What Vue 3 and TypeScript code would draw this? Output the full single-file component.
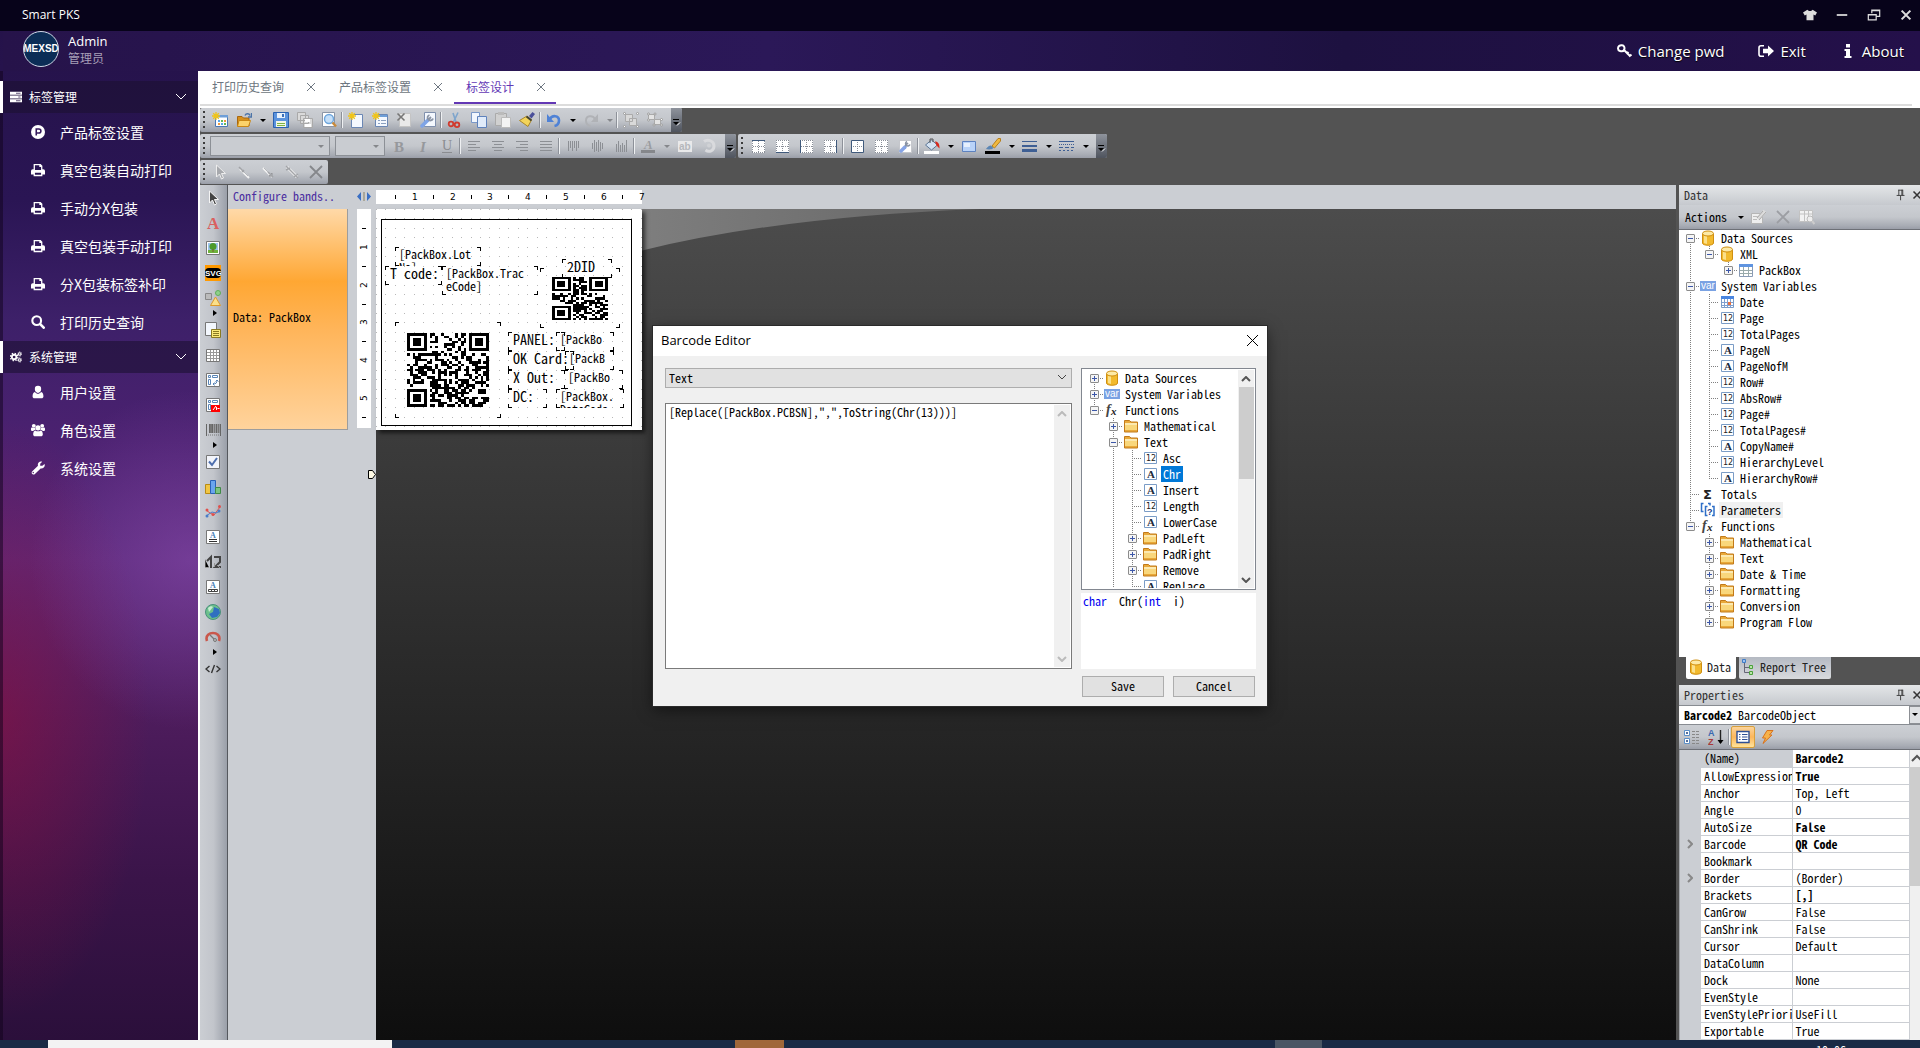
<script setup lang="ts">
import { ref } from 'vue'

interface TreeNode {
  label: string
  icon: string
  state?: 'open' | 'closed'
  mark?: 'selected' | 'hot'
  children?: TreeNode[]
}
interface TreeRow extends TreeNode {
  guides: boolean[]
  first: boolean
  last: boolean
}
interface Tool {
  kind: 'icon' | 'split' | 'sep'
  icon?: string
  name?: string
  off?: boolean
}

const icons: Record<string, string> = {
  server: '<path fill="#fff" d="M0 1h16v4H0zM0 6h16v4H0zM0 11h16v4H0z"/><path stroke="#2a1747" d="M8 3h6M3 8h0M11 8h3M8 13h6"/>',
  parking: '<circle cx="8" cy="8" r="8" fill="#fff"/><path d="M6 12V4.500h3a2.300 2.300 0 0 1 0 4.600H6" fill="none" stroke="#35195c" stroke-width="1.800"/>',
  print: '<path fill="#fff" fill-rule="evenodd" d="M3 1h8l2 2v4h1a2 2 0 0 1 2 2v4h-3v2H3v-2H0V9a2 2 0 0 1 2-2h1zM4.500 2.500V8h7V4.500H9.500v-2zM4.500 11v2.500h7V11z"/>',
  search: '<circle cx="6.500" cy="6.500" r="5" fill="none" stroke="#fff" stroke-width="2.400"/><path d="m10.500 10.500 4 4" stroke="#fff" stroke-width="3" stroke-linecap="round"/>',
  cogs: '<g fill="none" stroke="#fff"><circle cx="5.500" cy="8" r="3" stroke-width="2.400"/><circle cx="5.500" cy="8" r="5" stroke-width="1.600" stroke-dasharray="2 1.930"/><circle cx="13" cy="4" r="1.700" stroke-width="1.400"/><circle cx="13" cy="4" r="2.800" stroke-width="1" stroke-dasharray="1.200 1"/><circle cx="13" cy="12" r="1.700" stroke-width="1.400"/><circle cx="13" cy="12" r="2.800" stroke-width="1" stroke-dasharray="1.200 1"/></g>',
  user: '<path fill="#fff" d="M8 1a3.600 3.600 0 0 1 3.600 3.800C11.600 7 10 9 8 9S4.400 7 4.400 4.800A3.600 3.600 0 0 1 8 1zM4.500 8C5.500 9.300 6.700 10 8 10s2.500-.7 3.500-2c2 .3 2.700 2.500 2.700 5 0 1.500-1 2-2 2H3.800c-1 0-2-.5-2-2 0-2.500.7-4.700 2.700-5z"/>',
  group: '<g fill="#fff"><circle cx="3.200" cy="3.200" r="2.200"/><circle cx="12.800" cy="3.200" r="2.200"/><path d="M0 6.500c0-1.200 1-1.500 2-1.200 1 .4 2 .4 2.600 0 0 1.200.2 2 .8 2.700C4 8 3.200 8.500 2.500 9H1C.3 9 0 8.500 0 8zM16 6.500c0-1.200-1-1.500-2-1.200-1 .4-2 .4-2.600 0 0 1.200-.2 2-.8 2.700 1.400 0 2.200.5 2.900 1H15c.7 0 1-.5 1-1z"/><circle cx="8" cy="5.500" r="3"/><path d="M4.800 8.500c2 1.300 4.400 1.300 6.400 0 1.500.3 2.300 2 2.300 4.500 0 1.400-1 2-2 2h-7c-1 0-2-.6-2-2 0-2.500.8-4.200 2.300-4.500z"/></g>',
  wrench: '<path fill="#fff" d="M15.500 3.500c1 3-1.500 5.500-4.500 5l-6.500 6.300a2 2 0 0 1-3-3L8 5.500C7 2.500 9.500-.3 12.800.8L10.500 3v2.500H13zM3 12.500a.8.800 0 1 0 0 1.400.8.800 0 0 0 0-1.400z"/>',
  key: '<path fill="none" stroke="#fff" stroke-width="2" d="M2 5.500C2 3 4 2 6 2.300s3 2 2.300 4S5.500 8.500 4 8 2 6.500 2 5.500z"/><path fill="none" stroke="#fff" stroke-width="2" d="m7.500 6.500 7 7M10.500 11l2-2M13 13.500l2.500-2"/>',
  exit: '<path d="M6 2.800H3a2 2 0 0 0-2 2v6.400a2 2 0 0 0 2 2h3" fill="none" stroke="#fff" stroke-width="1.600"/><path fill="#fff" d="M5 5.700h5V2.500L16 8l-6 5.500v-3.200H5z"/>',
  info: '<path fill="#fff" d="M6 1h4v3.500H6zM4.500 6H10v7h1.500v2h-7v-2H6V8H4.500z"/>',
  shirt: '<path fill="#ddd" d="M5 2c1.500 2 4.500 2 6 0l5 3-2 3.500-2-1V14H4V7.500l-2 1L0 5z"/>',
  minimize: '<path fill="#ddd" d="M2 7h12v2H2z"/>',
  restore: '<path fill="none" stroke="#ddd" stroke-width="1.400" d="M1.500 7.500h9v6h-9zM5.500 6V2.500h9v7H11M5.500 3h9M1.500 8h9"/>',
  close: '<path d="m3 3 10 10M13 3 3 13" stroke="#ddd" stroke-width="2.400"/>',

  newReport: '<path fill="#fff" stroke="#4b79b5" d="M3.500 3.500h12v11h-12z"/><path fill="#6f9fd8" d="M3 3h13v2.500H3z"/><path fill="#59a7e8" d="M6 8h2v2H6zM9 11h2v2H9z"/><path fill="#62bb57" d="M9 8h2v2H9zM12 11h2v2h-2z"/><path fill="#f29a3c" d="M12 8h2v2h-2zM6 11h2v2H6z"/><path stroke="#f0c419" stroke-width="1.300" d="M4 0v8M0 4h8M1.200 1.200l5.600 5.600M6.800 1.200 1.200 6.800"/>',
  open: '<path fill="#d6901c" stroke="#a8660f" d="M1.500 14V4.500H6L7.500 6H13v8z"/><path fill="#fbd36b" stroke="#c98716" d="M1.500 14.500 3 8.500h11.500l-2 6z"/><path fill="none" stroke="#4c74a8" stroke-width="1.400" d="M9 3.500C10 1.500 13 1 14 3.500M15.500 1v4h-3.500"/>',
  save: '<path fill="#5b93dd" stroke="#2b62b0" d="M.5.5h15v15H.5z"/><path fill="#e8f1fb" d="M4 1h8v5H4z"/><path fill="#3a6fb8" d="M9 2h2v3H9z"/><path fill="#f3f7e8" d="M3 9h10v6H3z"/><path stroke="#7cb342" d="M4 11.500h8M4 13.500h8"/>',
  saveAll: '<g fill="#dadada" stroke="#a9a9a9"><path d="M.5.5h8v8h-8zM3.500 3.500h8v8h-8zM6.500 6.500h9v9h-9z"/></g><path fill="#fff" d="M8 7h5v3H8zM8 12h6v3H8z"/>',
  preview: '<path fill="#fff" stroke="#8b95a5" d="M1.500.5h12v14h-12z"/><circle cx="8" cy="7" r="4.500" fill="#c5dff8" stroke="#6ea6dc" stroke-width="1.400"/><path d="m11.500 10.500 3.500 4" stroke="#c98a3a" stroke-width="2.400"/>',
  newPage: '<path fill="#f4f8fe" stroke="#6b87b4" d="M3.500 2.500h11v13h-11z"/><path stroke="#f0c419" stroke-width="1.300" d="M4 0v8M0 4h8M1.200 1.200l5.600 5.600M6.800 1.200 1.200 6.800"/>',
  newDialog: '<path fill="#f4f8fe" stroke="#6b87b4" d="M3.500 2.500h12v12h-12z"/><path fill="#6f9fd8" d="M4 3h11v2H4z"/><path stroke="#8aa0c0" d="M6 8.500h2M9 8.500h5M6 11.500h2M9 11.500h5"/><path stroke="#f0c419" stroke-width="1.300" d="M4 0v8M0 4h8M1.200 1.200l5.600 5.600M6.800 1.200 1.200 6.800"/>',
  delPage: '<path fill="#e9e9e9" stroke="#c4c4c4" d="M3.500 1.500h11v13h-11z"/><path stroke="#777" stroke-width="1.600" d="m1.500 1.500 7 7M8.500 1.500l-7 7"/>',
  pageSetup: '<path fill="#f4f8fe" stroke="#8090ad" d="M4.500.5h11v14h-11z"/><path d="m2 14 6-6" stroke="#7fa4e6" stroke-width="3.500" stroke-linecap="round"/><path d="M8 8l3-3M9.500 3a2.800 2.800 0 1 0 3.500 3.500" stroke="#8a94a5" stroke-width="1.800" fill="none"/>',
  cut: '<path d="m6 1 3 9M11 .5 6.500 10" stroke="#7fa5cc" stroke-width="1.600"/><circle cx="4" cy="12" r="2.300" fill="none" stroke="#cf3b2f" stroke-width="1.800"/><circle cx="10" cy="12.800" r="2.300" fill="none" stroke="#cf3b2f" stroke-width="1.800"/>',
  copy: '<path fill="#f1f6fd" stroke="#7a98c8" d="M.5.500h8v10h-8z"/><path fill="#e0ebfa" stroke="#5f82bc" d="M6.500 4.500h9v11h-9z"/>',
  paste: '<path fill="#d0d0d0" stroke="#aaa" d="M.5 1.500h11v12H.5z"/><path fill="#bbb" d="M3 0h6v3H3z"/><path fill="#f3f3f3" stroke="#bbb" d="M6.500 5.500h9v10h-9z"/>',
  brush: '<path fill="#4a4f9a" d="m10 4 3.500-4L16 2l-3.500 4.500z"/><path fill="#f3d45a" stroke="#a8862a" d="M.5 8.500 8 4l4.500 4L9 14.500z"/><path d="m7.500 4.500 5 4" stroke="#443" stroke-width="2"/>',
  undo: '<path d="M4 7C6 3 13 3 13 8.500c0 3-2 5-4.500 5.500" fill="none" stroke="#4f82d6" stroke-width="2.600"/><path fill="#4f82d6" d="M1 2v8h7z"/>',
  redo: '<path d="M12 7C10 3 3 3 3 8.500c0 3 2 5 4.500 5.500" fill="none" stroke="#b0b2b6" stroke-width="2"/><path fill="#b0b2b6" d="M15 2v8H8z"/>',
  group2: '<path fill="#d9d9d9" stroke="#aaa" d="M2.500 2.500h7v7h-7zM6.500 6.500h7v7h-7z"/><g fill="#fff" stroke="#999"><circle cx="1.500" cy="1.500" r="1"/><circle cx="14.500" cy="1.500" r="1"/><circle cx="1.500" cy="14.500" r="1"/><circle cx="14.500" cy="14.500" r="1"/></g>',
  ungroup: '<path fill="#e4e4e4" stroke="#aaa" d="M1.500 2.500h6v5h-6zM7.500 7.500h6v5h-6z"/><g fill="#fff" stroke="#999"><circle cx="1.500" cy="2" r="1"/><circle cx="8" cy="2" r="1"/><circle cx="1.500" cy="8" r="1"/><circle cx="7" cy="13" r="1"/><circle cx="14.500" cy="7.500" r="1"/><circle cx="14.500" cy="13" r="1"/></g>',

  bold: '<text x="3" y="14" font-family="Liberation Serif" font-size="15" font-weight="700" fill="#96989c">B</text>',
  italic: '<text x="5" y="14" font-family="Liberation Serif" font-size="15" font-weight="700" font-style="italic" fill="#96989c">I</text>',
  underline: '<text x="3" y="12" font-family="Liberation Serif" font-size="14" fill="#8a8c90">U</text><path stroke="#8a8c90" d="M3 14.500h10"/>',
  alignL: '<path stroke="#8c8f94" d="M2 3.500h12M2 6.500h8M2 9.500h12M2 12.500h8"/>',
  alignC: '<path stroke="#8c8f94" d="M2 3.500h12M4 6.500h8M2 9.500h12M4 12.500h8"/>',
  alignR: '<path stroke="#8c8f94" d="M2 3.500h12M6 6.500h8M2 9.500h12M6 12.500h8"/>',
  alignJ: '<path stroke="#8c8f94" d="M2 3.500h12M2 6.500h12M2 9.500h12M2 12.500h12"/>',
  top: '<path stroke="#8c8f94" d="M3.500 3v10M5.500 3v7M7.500 3v10M9.500 3v7M11.500 3v10M13.500 3v7"/>',
  middle: '<path stroke="#8c8f94" d="M3.500 5v6M5.500 2v12M7.500 4v9M9.500 2v12M11.500 4v9M13.500 5v6"/>',
  bottom: '<path stroke="#8c8f94" d="M3.500 6v8M5.500 3v11M7.500 7v7M9.500 5v9M11.500 7v7M13.500 2v12"/>',
  fontColor: '<text x="4" y="11" font-family="Liberation Serif" font-size="13" font-style="italic" font-weight="700" fill="#9a9ca0">A</text><path fill="#85878b" d="M1 12h14v3H1z"/>',
  highlight: '<path fill="#e9e9ea" d="M1 3h14v11H1z"/><text x="2" y="12" font-family="Liberation Sans" font-size="10" font-weight="700" fill="#b5b7bb">ab</text>',
  rotate: '<path d="M3 3.500C7 .5 13 3 13 8s-5 6.500-8.500 4" fill="none" stroke="#d9dadd" stroke-width="3"/><circle cx="8" cy="7.500" r="2" fill="#d0d2d5"/>',
  bTop: '<path fill="#fff" d="M2 2h13v13H2z"/><path stroke="#8a8f98" stroke-dasharray="1 1" d="M2.500 3v12M14.500 3v12M2 14.500h13M8.500 3v12M3 8.500h12"/><path stroke="#405a7c" d="M2 2.500h13"/>',
  bBottom: '<path fill="#fff" d="M2 2h13v13H2z"/><path stroke="#8a8f98" stroke-dasharray="1 1" d="M2.500 2v12M14.500 2v12M2 2.500h13M8.500 2v12M3 8.500h12"/><path stroke="#405a7c" d="M2 14.500h13"/>',
  bLeft: '<path fill="#fff" d="M2 2h13v13H2z"/><path stroke="#8a8f98" stroke-dasharray="1 1" d="M14.500 2v12M2 14.500h13M2 2.500h13M8.500 2v12M3 8.500h12"/><path stroke="#405a7c" d="M2.500 2v13"/>',
  bRight: '<path fill="#fff" d="M2 2h13v13H2z"/><path stroke="#8a8f98" stroke-dasharray="1 1" d="M2.500 2v12M2 14.500h13M2 2.500h13M8.500 2v12M3 8.500h12"/><path stroke="#405a7c" d="M14.500 2v13"/>',
  bAll: '<path fill="#fff" stroke="#405a7c" d="M2.500 2.500h12v12h-12z"/><path stroke="#8a8f98" stroke-dasharray="1 1" d="M8.500 4v10M4 8.500h10"/>',
  bNone: '<path fill="#fff" d="M2 2h13v13H2z"/><path stroke="#8a8f98" stroke-dasharray="1 1" d="M2.500 2v13M14.500 2v13M2 14.500h13M2 2.500h13M8.500 2v12M3 8.500h12"/>',
  bEdit: '<path fill="#fff" d="M2 2h13v13H2z"/><path fill="none" stroke="#8a8f98" stroke-dasharray="1 1" d="M2.500 2.500h12v12h-12z"/><path d="m4 13 4-4" stroke="#86a4e6" stroke-width="3.500" stroke-linecap="round"/><path d="m8 8 3-3M10 3.500a2.300 2.300 0 1 0 3 3" stroke="#8a94a5" stroke-width="1.600" fill="none"/>',
  fill: '<path fill="#d4e2f2" stroke="#5d7898" d="m1.500 7 6-5 6 5-6 5z"/><path d="M6 5V1h3v3" fill="none" stroke="#555"/><path fill="#d8281c" d="M11 3.500c3 0 4.500 2 4.500 7l-3-3z"/><path fill="#fff" d="M0 13h15v3H0z"/>',
  fillBox: '<path fill="#b9d3f8" stroke="#5d82c0" d="M1.500 3.500h13v10h-13z"/><path fill="#e6f0fd" d="M3 5h6v4H3z"/>',
  lineColor: '<path fill="#f0b940" stroke="#b57f1c" d="M7 8 13 .5h2.500V3L9.500 10z"/><path fill="#5b86b4" d="M1 11c1-1 2.500-4 5-3.500L8.500 10C6 12 3 11.500 1 11z"/><path fill="#000" d="M0 13h15v3H0z"/>',
  lineWidth: '<path fill="#3e5f94" d="M0 3h15v1H0zM0 7h15v2H0zM0 11h15v3H0z"/>',
  lineStyle: '<path stroke="#3e5f94" d="M0 3.500h15"/><path stroke="#3e5f94" stroke-dasharray="1 1" d="M0 6.500h15"/><path stroke="#3e5f94" stroke-dasharray="4 2" d="M0 9.500h15"/><path stroke="#3e5f94" stroke-dasharray="2 2" d="M0 12.500h15"/>',
  more: '<path d="M2 11.500h6" stroke="#000"/><path d="M2 14h6l-3 3z"/><path d="m6 17.500 3-3" stroke="#fff"/>',

  arrowOff: '<path fill="#a7a9ad" stroke="#eee" d="M4.500 1v12l3-3 2 5 2-1-2-4.500h4z"/>',
  link1: '<path stroke="#f2f2f2" stroke-width="2" d="m4 5 9 9"/><path stroke="#a2a4a8" stroke-width="1.600" d="m3 3 5 5M6 8l2-2"/><path stroke="#b5b7bb" d="m8 8 4 4"/>',
  link2: '<path stroke="#f2f2f2" stroke-width="2" d="m3 4 9 9"/><path stroke="#b5b7bb" d="m4 4 5 5"/><path stroke="#a2a4a8" stroke-width="1.600" d="m8 8 5 5M12 9v3H9"/>',
  link3: '<path stroke="#f2f2f2" stroke-width="3" d="m3 3 10 10"/><path stroke="#a2a4a8" stroke-width="1.400" d="m2 2 12 12M2 6l4-2M14 10l-4 3"/>',
  delOff: '<path stroke="#85878b" stroke-width="1.800" d="m2 2 12 12M14 2 2 14"/>',

  pointer: '<path fill="#444" stroke="#f4f4f4" d="M4.500 1v12l3-3 2 5 2-1-2-4.500h4z"/>',
  textObj: '<text x="2" y="14" font-family="Liberation Serif" font-size="17" font-weight="700" fill="#d9605f">A</text>',
  picture: '<path fill="#fff" stroke="#777" d="M1.500 1.500h13v13h-13z"/><path fill="#9cc3ee" d="M3 3h10v10H3z"/><circle cx="8" cy="6.500" r="3.500" fill="#4d9a2c"/><path fill="#6fb23c" d="M3 10h10v3H3z"/><path fill="#7a5b2b" d="M7.500 9h1v3h-1z"/>',
  svg: '<path fill="#ff9900" d="M0 0h16v16H0z"/><rect y="3" width="16" height="10" rx="4"/><text x="0" y="11" font-family="Liberation Sans" font-size="8" font-weight="700" fill="#fff">SVG</text>',
  shapes: '<path fill="#bbb" stroke="#888" d="M.5 3.500h6v6h-6z"/><circle cx="13" cy="3" r="2.500" fill="#8fd08a" stroke="#5fae5b"/><path fill="#fbe08a" stroke="#dd9a2a" d="m10.500 7 5 8.500h-10z"/>',
  subreport: '<path fill="#f3f7fd" stroke="#777" d="M.5.500h11v13H.5z"/><path fill="#fbeb7a" stroke="#8a7b22" d="M6.500 7.500h9v8h-9z"/><path stroke="#8a7b22" d="M8 9.500h6M8 11.500h6M8 13.500h6"/>',
  grid: '<path fill="#fff" stroke="#777" d="M1.500 2.500h13v12h-13z"/><path stroke="#999" d="M2 5.500h12M2 8.500h12M2 11.500h12M5.500 3v11M8.500 3v11M11.500 3v11"/>',
  matrix: '<path fill="#fff" stroke="#777" d="M1.500 1.500h13v13h-13z"/><g fill="none" stroke="#5a86b8"><path d="M3.500 3.500h2v2h-2zM7.500 3.500h5v2h-5zM3.500 7.500h2v5h-2z"/><path d="M8 12c3 0 4-1 4-4M10.500 9.500 12 8l1.500 1.500M9.500 10.500 8 12l1.500 1.500" /></g>',
  matrix2: '<path fill="#fff" stroke="#777" d="M1.500 1.500h13v13h-13z"/><g fill="none" stroke="#5a86b8"><path d="M3.500 3.500h2v2h-2zM7.500 3.500h5v2h-5zM3.500 7.500h2v5h-2z"/></g><path fill="#f00" d="M6 8h9v7H6z"/><path stroke="#fff" d="M8 13l3-4M11.500 13v-3M12.500 11.500h2"/>',
  barcode: '<path stroke="#666" d="M1.500 2v12M4.500 2v9M7.500 2v9M11.500 2v9M15.500 2v12"/><path stroke="#777" stroke-width="2" d="M6 2v9M9.500 2v9M13.500 2v9"/><path stroke="#777" stroke-dasharray="1 1" d="M3 13h12"/>',
  check: '<path fill="#f2f4fa" stroke="#777" d="M1.500 1.500h13v13h-13z"/><path d="m4 7.500 3 3.500 5-7" fill="none" stroke="#4e6fae" stroke-width="2"/>',
  chart: '<path fill="#f1c644" stroke="#b98b14" d="M.5 5.500h5v9h-5z"/><path fill="#6aa5ee" stroke="#2a62b8" d="M5.500 1.500h5v13h-5z"/><path fill="#7cc382" stroke="#3f8a46" d="M10.500 8.500h5v6h-5z"/>',
  spark: '<path d="m1 6 4 3 4 2 6-8" fill="none" stroke="#e0504c"/><path d="m1 12 6-4 4 1 4-2" fill="none" stroke="#4a7cc8"/><g fill="#e0504c"><circle cx="2" cy="6" r="1.500"/><circle cx="8" cy="10.500" r="1.500"/><circle cx="14.500" cy="2.500" r="1.500"/></g><g fill="#4a7cc8"><circle cx="2" cy="12" r="1.500"/><circle cx="14" cy="7" r="1.500"/></g>',
  rich: '<path fill="#fff" stroke="#777" d="M1.500 1.500h13v13h-13z"/><text x="5" y="9" font-family="Liberation Serif" font-size="8" font-weight="700" fill="#4a82b8">A</text><path stroke="#333" d="M4 10.500h8M4 12.500h8"/>',
  digits: '<g fill="none" stroke="#444" stroke-width="2"><path d="M2 7l4-4v11M9 3h6v5l-5 5h6"/></g><path stroke="#999" d="M0 5.500v8h4M9.500 9v4M12 11l3 3"/>',
  cells: '<path fill="#fff" stroke="#777" d="M1.500 1.500h13v13h-13z"/><text x="5" y="9" font-family="Liberation Serif" font-size="8" font-weight="700" fill="#4a82b8">A</text><path fill="none" stroke="#444" d="M3.500 10.500h9v2h-9zM6.500 10v3M9.500 10v3"/>',
  globe: '<circle cx="8" cy="8" r="7.500" fill="#6cc08c" stroke="#4a8f7c"/><path fill="#2f6fc0" d="M8 8 9 3l5 2 1 4-3 4-5 1-3-4z"/><path fill="#c8ecd2" d="M3 4c2-2 4-2 5-1L4 8z"/>',
  gauge: '<path d="M2 12C0 6 5 4 8 4s8 2 6 8" fill="none" stroke="#c9574b" stroke-width="2.600"/><path d="m5 6 6 6" stroke="#777" stroke-width="1.200"/><circle cx="10" cy="11" r="1.500" fill="#bbb" stroke="#777"/>',
  html: '<path d="M4.500 5 1 8l3.500 3M11.500 5 15 8l-3.500 3M9.500 4l-3 8" fill="none" stroke="#333" stroke-width="1.400"/>',

  db: '<path fill="#f2ba2e" stroke="#d08f10" d="M2.500 4v9c0 3 11 3 11 0V4z"/><path fill="#fbe08a" d="M4 6h3v8L4 13z"/><ellipse cx="8" cy="3.500" rx="5.500" ry="2.500" fill="#fdeaa6" stroke="#d08f10"/>',
  var: '<path fill="#7aa2e3" d="M0 3h16v10H0z"/><text x="1" y="11" font-family="Liberation Sans" font-size="10" fill="#fff">var</text>',
  fx: '<text x="2" y="12" font-family="Liberation Serif" font-size="14" font-style="italic" font-weight="700" fill="#444">f</text><text x="7" y="13" font-family="Liberation Serif" font-size="11" font-style="italic" font-weight="700" fill="#222">x</text>',
  folder: '<path fill="#e9a93a" stroke="#c27a1a" d="M1.500 14V2.500h5L8 4h6.500v10z"/><path fill="#f9d77c" d="M2 5.500h12V12H2z"/><path fill="#fce9b0" d="M2 5h12v2H2z"/>',
  num: '<path fill="#fff" stroke="#7a9cc6" d="M2.500 2.500h12v11h-12z"/><text x="4" y="11" font-family="DejaVu Sans" font-size="8" fill="#222">12</text>',
  str: '<path fill="#fff" stroke="#7a9cc6" d="M2.500 2.500h12v11h-12z"/><text x="5" y="12" font-family="Liberation Serif" font-size="11" font-weight="700" fill="#1c2a3c">A</text>',
  table: '<path fill="#fff" stroke="#8a9bb5" d="M1.500 2.500h13v12h-13z"/><path fill="#5f94e0" d="M1 2h14v3H1z"/><path stroke="#9aa" d="M2 8.500h12M2 11.500h12M5.500 5v9M10.500 5v9"/>',
  date: '<path fill="#fff" stroke="#7a9cc6" d="M2.500 2.500h12v11h-12z"/><path fill="#4a86e0" d="M2 2h13v3H2z"/><path stroke="#7fa0d0" d="M3 8.500h11M3 11.500h11M5.500 5v9M8.500 5v9M11.500 5v9"/><path fill="#e87040" d="M9 8h3v3H9z"/>',
  sum: '<text x="3" y="13" font-family="DejaVu Sans" font-size="13" font-weight="700" fill="#222">Σ</text>',
  param: '<path d="M3.500 1.500h-2v8h2M7.500 4.500h-2v9h2M8 1.500h2v2M12 4.500h2v9h-2" fill="none" stroke="#2f6fc8" stroke-width="1.500"/><text x="7" y="13" font-family="Liberation Sans" font-size="9" font-weight="700" fill="#123a8a">?</text>',
  edit: '<path fill="#eee" stroke="#b5b5b5" d="M.5 4.500h11v10H.5z"/><path stroke="#bbb" d="M2 7.500h6M2 10.500h4"/><path stroke="#dcdcdc" stroke-width="4" d="m7 10 7-8"/><path stroke="#aaa" d="m6 9 6-7M8 11l7-8"/>',
  del: '<path stroke="#9c9ea3" stroke-width="1.800" d="m2 2 12 12M14 2 2 14"/>',
  view: '<path fill="#f2f2f2" stroke="#c2c2c2" d="M.5 1.500h13v11H.5z"/><path stroke="#c2c2c2" d="M1 5h12M5.500 2v10M9.500 2v10"/><circle cx="11" cy="10" r="3" fill="#eee" stroke="#bbb"/><path stroke="#ccc" stroke-width="2" d="m13 12 2.500 3"/>',
  tree: '<path fill="none" stroke="#667" d="M3.500 4v9.500H8M3.500 8.500H8"/><path fill="#9cc3f2" stroke="#3f7cc8" d="M1.500.5h3v3h-3z"/><path fill="#b9e5a8" stroke="#4aa03a" d="M8.500 6.500h3v3h-3zM8.500 12.500h3v3h-3z"/>',
  categorized: '<g fill="#fff" stroke="#5b8fc8"><path d="M.5 1.500h5v5h-5zM.5 9.500h5v5h-5z"/></g><path stroke="#1c3f7a" d="M2 4h2M3 3v2M2 12h2M3 11v2"/><path stroke="#888" stroke-dasharray="3 1" d="M8 2.500h8M8 5.500h8M8 8.500h8M8 11.500h8M8 14.500h8"/>',
  sort: '<text x="0" y="7" font-family="Liberation Sans" font-size="9" font-weight="700" fill="#3a68b0">A</text><text x="0" y="16" font-family="Liberation Sans" font-size="9" font-weight="700" fill="#a83a3a">Z</text><path stroke="#222" stroke-width="1.400" d="M12.500 1v13"/><path d="m9.500 11 3 4 3-4z"/>',
  list: '<path fill="#fff" stroke="#2e4f94" stroke-width="1.400" d="M2 2.500h12v11H2z"/><path stroke="#2e4f94" d="M4 5.500h1.500M7 5.500h5.500M4 8h1.500M7 8h5.500M4 10.500h1.500M7 10.500h5.500"/>',
  bolt: '<path fill="#f7b24a" stroke="#d8721c" d="M8 1.500h6L10.500 6h2.500L4 14.500 6.500 9H3.500z"/>',
  pin: '<path fill="none" stroke="#333" d="M5.500 2v6.500M3 8.500h9M10 2v6.500M9 2v6M5 2.500h5M7.500 9v5"/>',
  x: '<path stroke="#333" stroke-width="1.800" d="m4 4 8 8M12 4l-8 8"/>',
}

const menu = [
  {
    title: '标签管理', icon: 'server',
    items: [
      ['parking', '产品标签设置'], ['print', '真空包装自动打印'], ['print', '手动分X包装'],
      ['print', '真空包装手动打印'], ['print', '分X包装标签补印'], ['search', '打印历史查询'],
    ],
  },
  { title: '系统管理', icon: 'cogs', items: [['user', '用户设置'], ['group', '角色设置'], ['wrench', '系统设置']] },
]

const tabs = ['打印历史查询', '产品标签设置', '标签设计']
const activeTab = ref(2)

const t = (icon: string, name: string, off = false): Tool => ({ kind: 'icon', icon, name, off })
const s = (icon: string, name: string, off = false): Tool => ({ kind: 'split', icon, name, off })
const sep: Tool = { kind: 'sep' }

const standardBar: Tool[] = [
  t('newReport', 'New report'), s('open', 'Open'), t('save', 'Save report'), t('saveAll', 'Save all'), t('preview', 'Preview'), sep,
  t('newPage', 'New page'), t('newDialog', 'New dialog'), t('delPage', 'Delete page'), t('pageSetup', 'Page setup'), sep,
  t('cut', 'Cut'), t('copy', 'Copy'), t('paste', 'Paste'), t('brush', 'Format painter'), sep,
  s('undo', 'Undo'), s('redo', 'Redo', true), sep, t('group2', 'Group'), t('ungroup', 'Ungroup'),
]
const textBar: Tool[] = [
  t('bold', 'Bold'), t('italic', 'Italic'), t('underline', 'Underline'), sep,
  t('alignL', 'Align left'), t('alignC', 'Align center'), t('alignR', 'Align right'), t('alignJ', 'Justify'), sep,
  t('top', 'Align top'), t('middle', 'Align middle'), t('bottom', 'Align bottom'), sep,
  s('fontColor', 'Text color', true), t('highlight', 'Highlight'), t('rotate', 'Rotate'),
]
const borderBar: Tool[] = [
  t('bTop', 'Top line'), t('bBottom', 'Bottom line'), t('bLeft', 'Left line'), t('bRight', 'Right line'), sep,
  t('bAll', 'All lines'), t('bNone', 'No lines'), t('bEdit', 'Edit border'), sep,
  s('fill', 'Fill color'), t('fillBox', 'Fill'), s('lineColor', 'Line color'), s('lineWidth', 'Line width'), s('lineStyle', 'Line style'),
]
const linkBar: Tool[] = [
  t('arrowOff', 'Select'), t('link1', 'Line start'), t('link2', 'Line end'), t('link3', 'Line both'), t('delOff', 'Remove'),
]
const toolbox: [string, boolean][] = [
  ['pointer', false], ['textObj', false], ['picture', false], ['svg', false], ['shapes', true], ['subreport', false],
  ['grid', false], ['matrix', false], ['matrix2', false], ['barcode', true], ['check', false], ['chart', false],
  ['spark', false], ['rich', false], ['digits', false], ['cells', false], ['globe', false], ['gauge', true], ['html', false],
]

const CM = 37.8
const at = (cm: number) => Math.round(cm * CM)
const dots: [number, number][] = []
for (let r = 0; r < 24; r++) for (let c = 0; c < 29; c++) dots.push([at(c / 4), at(r / 4)])

/* Finder squares in three corners, hashed modules elsewhere. */
function qrPath(n: number, seed: number): string {
  let d = ''
  const finder = (x: number, y: number): boolean | null => {
    for (const [fx, fy] of [[0, 0], [n - 7, 0], [0, n - 7]]) {
      const dx = x - fx
      const dy = y - fy
      if (dx >= -1 && dx <= 7 && dy >= -1 && dy <= 7) {
        const ring = Math.max(Math.abs(dx - 3), Math.abs(dy - 3))
        return ring === 3 || ring <= 1
      }
    }
    return null
  }
  let h = seed
  for (let y = 0; y < n; y++) {
    for (let x = 0; x < n; x++) {
      h = (h * 1103515245 + 12345) % 2147483648
      const f = finder(x, y)
      if (f ?? (h / 2147483648) < 0.52) d += `M${x} ${y}h1v1h-1z`
    }
  }
  return d
}
const bigQr = qrPath(29, 71)
const smallQr = qrPath(21, 13)

const objects: { x: number; y: number; w: number; h: number; text: string; kind: string }[] = [
  { x: 19, y: 38, w: 86, h: 19, text: '[PackBox.LotNo]', kind: 'wrap' },
  { x: 9, y: 57, w: 57, h: 19, text: 'T code:', kind: 'large' },
  { x: 66, y: 57, w: 96, h: 29, text: '[PackBox.TraceCode]', kind: 'wrap' },
  { x: 186, y: 50, w: 50, h: 19, text: '2DID', kind: 'large' },
  { x: 164, y: 59, w: 80, h: 60, text: '', kind: '' },
  { x: 19, y: 113, w: 106, h: 96, text: '', kind: '' },
  { x: 132, y: 123, w: 57, h: 19, text: 'PANEL:', kind: 'large' },
  { x: 132, y: 142, w: 66, h: 19, text: 'OK Card:', kind: 'large' },
  { x: 132, y: 161, w: 57, h: 19, text: 'X Out:', kind: 'large' },
  { x: 132, y: 180, w: 39, h: 19, text: 'DC:', kind: 'large' },
  { x: 180, y: 123, w: 58, h: 19, text: '[PackBo', kind: '' },
  { x: 189, y: 142, w: 49, h: 19, text: '[PackB', kind: '' },
  { x: 188, y: 161, w: 59, h: 19, text: '[PackBo', kind: '' },
  { x: 180, y: 180, w: 68, h: 19, text: '[PackBox.DateCode1]', kind: 'wrap' },
]

const n = (label: string, icon: string): TreeNode => ({ label, icon })
const folder = (label: string): TreeNode => ({ label, icon: 'folder', state: 'closed' })

const dataTree: TreeNode[] = [
  {
    label: 'Data Sources', icon: 'db', state: 'open',
    children: [{ label: 'XML', icon: 'db', state: 'open', children: [{ label: 'PackBox', icon: 'table', state: 'closed' }] }],
  },
  {
    label: 'System Variables', icon: 'var', state: 'open',
    children: [
      n('Date', 'date'), n('Page', 'num'), n('TotalPages', 'num'), n('PageN', 'str'), n('PageNofM', 'str'), n('Row#', 'num'),
      n('AbsRow#', 'num'), n('Page#', 'num'), n('TotalPages#', 'num'), n('CopyName#', 'str'), n('HierarchyLevel', 'num'), n('HierarchyRow#', 'str'),
    ],
  },
  n('Totals', 'sum'),
  { label: 'Parameters', icon: 'param', mark: 'hot' },
  {
    label: 'Functions', icon: 'fx', state: 'open',
    children: ['Mathematical', 'Text', 'Date & Time', 'Formatting', 'Conversion', 'Program Flow'].map(folder),
  },
]
const functionTree: TreeNode[] = [
  { label: 'Data Sources', icon: 'db', state: 'closed' },
  { label: 'System Variables', icon: 'var', state: 'closed' },
  {
    label: 'Functions', icon: 'fx', state: 'open',
    children: [
      folder('Mathematical'),
      {
        label: 'Text', icon: 'folder', state: 'open',
        children: [
          n('Asc', 'num'), { label: 'Chr', icon: 'str', mark: 'selected' }, n('Insert', 'str'), n('Length', 'num'), n('LowerCase', 'str'),
          folder('PadLeft'), folder('PadRight'), folder('Remove'), n('Replace', 'str'),
        ],
      },
      folder('Date & Time'),
    ],
  },
]
function flatten(nodes: TreeNode[], guides: boolean[] = []): TreeRow[] {
  return nodes.flatMap((node, i) => {
    const last = i === nodes.length - 1
    const row: TreeRow = { ...node, guides, first: i === 0 && guides.length === 0, last }
    return [row, ...flatten(node.children ?? [], [...guides, !last])]
  })
}
const dataRows = flatten(dataTree)
const functionRows = flatten(functionTree).slice(0, 14)

const expression = ref('[Replace([PackBox.PCBSN],",",ToString(Chr(13)))]')

const props: [string, string, boolean?, boolean?][] = [
  ['(Name)', 'Barcode2', true], ['AllowExpressions', 'True', true], ['Anchor', 'Top, Left'], ['Angle', '0'], ['AutoSize', 'False', true],
  ['Barcode', 'QR Code', true, true], ['Bookmark', ''], ['Border', '(Border)', false, true], ['Brackets', '[,]', true], ['CanGrow', 'False'],
  ['CanShrink', 'False'], ['Cursor', 'Default'], ['DataColumn', ''], ['Dock', 'None'], ['EvenStyle', ''],
  ['EvenStylePriority', 'UseFill'], ['Exportable', 'True'],
]
</script>

<template>
  <div class="app">
    <header class="titlebar">
      <span>Smart PKS</span>
      <div class="win-buttons">
        <button v-for="b in ['shirt', 'minimize', 'restore', 'close']" :key="b" :aria-label="b">
          <svg viewBox="0 0 16 16" v-html="icons[b]"></svg>
        </button>
      </div>
    </header>

    <div class="userbar">
      <div class="logo">MEXSD</div>
      <div class="who"><b>Admin</b><span>管理员</span></div>
      <nav class="links">
        <a href="#pwd"><svg viewBox="0 0 16 16" v-html="icons.key"></svg>Change pwd</a>
        <a href="#exit"><svg viewBox="0 0 16 16" v-html="icons.exit"></svg>Exit</a>
        <a href="#about"><svg viewBox="0 0 16 16" v-html="icons.info"></svg>About</a>
      </nav>
    </div>

    <div class="main">
      <aside class="sidebar">
        <section v-for="m in menu" :key="m.title">
          <button class="menu-head">
            <svg viewBox="0 0 16 16" v-html="icons[m.icon]"></svg>
            <span>{{ m.title }}</span>
            <svg class="chev" viewBox="0 0 10 10"><path d="M0 2l5 5 5-5" fill="none" stroke="#fff" /></svg>
          </button>
          <a v-for="[ic, label] in m.items" :key="label" class="menu-item" href="#menu">
            <svg viewBox="0 0 16 16" v-html="icons[ic]"></svg>{{ label }}
          </a>
        </section>
      </aside>

      <div class="content">
        <div class="tabs" role="tablist">
          <div v-for="(tab, i) in tabs" :key="tab" class="tab" :class="{ active: i === activeTab }">
            <button role="tab" @click="activeTab = i">{{ tab }}</button>
            <button class="tab-x" :aria-label="'Close ' + tab"><svg viewBox="0 0 8 8"><path d="M0 0l8 8M8 0L0 8" stroke="#6d7680" /></svg></button>
          </div>
        </div>

        <div class="designer">
          <div class="left">
            <div class="bars">
              <div class="bar-row">
                <div class="bar">
                  <i class="grip"></i>
                  <template v-for="(it, i) in standardBar" :key="i">
                    <i v-if="it.kind === 'sep'" class="sep"></i>
                    <template v-else>
                      <button class="tool" :aria-label="it.name"><svg viewBox="0 0 16 16" v-html="icons[it.icon!]"></svg></button>
                      <button v-if="it.kind === 'split'" class="drop" :class="{ off: it.off }" :aria-label="it.name + ' options'"></button>
                    </template>
                  </template>
                  <i class="pad"></i>
                  <button class="more" aria-label="Toolbar options"><svg viewBox="0 0 11 24" v-html="icons.more"></svg></button>
                </div>
              </div>
              <div class="bar-row">
                <div class="bar">
                  <i class="grip"></i>
                  <span class="combo font"><select aria-label="Font" disabled></select></span>
                  <span class="combo size"><select aria-label="Font size" disabled></select></span>
                  <template v-for="(it, i) in textBar" :key="i">
                    <i v-if="it.kind === 'sep'" class="sep"></i>
                    <template v-else>
                      <button class="tool" :aria-label="it.name"><svg viewBox="0 0 16 16" v-html="icons[it.icon!]"></svg></button>
                      <button v-if="it.kind === 'split'" class="drop" :class="{ off: it.off }" :aria-label="it.name + ' options'"></button>
                    </template>
                  </template>
                  <i class="pad"></i>
                  <button class="more" aria-label="Toolbar options"><svg viewBox="0 0 11 24" v-html="icons.more"></svg></button>
                </div>
                <div class="bar">
                  <i class="grip"></i>
                  <template v-for="(it, i) in borderBar" :key="i">
                    <i v-if="it.kind === 'sep'" class="sep"></i>
                    <template v-else>
                      <button class="tool" :aria-label="it.name"><svg viewBox="0 0 16 16" v-html="icons[it.icon!]"></svg></button>
                      <button v-if="it.kind === 'split'" class="drop" :aria-label="it.name + ' options'"></button>
                    </template>
                  </template>
                  <i class="pad"></i>
                  <button class="more" aria-label="Toolbar options"><svg viewBox="0 0 11 24" v-html="icons.more"></svg></button>
                </div>
              </div>
              <div class="bar-row">
                <div class="bar">
                  <i class="grip"></i>
                  <button v-for="it in linkBar" :key="it.name" class="tool" :aria-label="it.name"><svg viewBox="0 0 16 16" v-html="icons[it.icon!]"></svg></button>
                </div>
              </div>
            </div>

            <div class="work">
              <div class="toolbox">
                <template v-for="[ic, more] in toolbox" :key="ic">
                  <button class="box-tool" :aria-label="ic"><svg viewBox="0 0 16 16" v-html="icons[ic]"></svg></button>
                  <i v-if="more" class="box-more"></i>
                </template>
              </div>

              <div class="bands">
                <div class="bands-head">
                  <a href="#bands">Configure bands..</a>
                  <svg viewBox="0 0 14 9"><path fill="#3a6fc4" d="M4 0v9L0 4.500zM10 0v9l4-4.500z" /><path fill="#aaa79a" d="M6 0h2v9H6z" /></svg>
                </div>
                <div class="bands-body">
                  <div class="band">Data: PackBox</div>
                  <svg class="v-ruler" viewBox="0 0 14 219">
                    <template v-for="i in 6" :key="i">
                      <path stroke="#000" :d="`M5 ${at(i - 0.5)}.500h4`" />
                      <text v-if="i < 6" :transform="`translate(10 ${at(i) + 3}) rotate(-90)`">{{ i }}</text>
                    </template>
                  </svg>
                </div>
                <svg class="handle" viewBox="0 0 8 10"><path fill="#fffbe6" stroke="#000" d="M.500 .500h4l3 4-3 4h-4z" /></svg>
              </div>

              <div class="canvas">
                <div class="h-strip">
                  <svg class="h-ruler" viewBox="0 0 266 14">
                    <template v-for="i in 7" :key="i">
                      <path stroke="#000" :d="`M${at(i - 0.5)}.500 5v4`" />
                      <text :x="at(i) - 2" y="10">{{ i }}</text>
                    </template>
                  </svg>
                </div>
                <div class="stage">
                  <svg class="swoosh" viewBox="0 0 300 44" preserveAspectRatio="none">
                    <defs><linearGradient id="sw" x1="0" x2="1"><stop offset="0" stop-color="#7e7e7e" /><stop offset="1" stop-color="#666" /></linearGradient></defs>
                    <path fill="url(#sw)" d="M0 0h300Q120 8 0 42z" />
                  </svg>
                  <div class="page">
                    <svg class="dots" viewBox="0 0 266 221" shape-rendering="crispEdges">
                      <rect v-for="([x, y], i) in dots" :key="i" :x="x" :y="y" width="1" height="1" fill="#b8b8b8" />
                    </svg>
                    <div class="frame"></div>
                    <svg class="qr big" viewBox="0 0 29 29" preserveAspectRatio="none" shape-rendering="crispEdges"><path :d="bigQr" /></svg>
                    <svg class="qr small" viewBox="0 0 21 21" preserveAspectRatio="none" shape-rendering="crispEdges"><path :d="smallQr" /></svg>
                    <div
                      v-for="(o, i) in objects" :key="i" class="obj" :class="o.kind"
                      :style="{ left: o.x + 'px', top: o.y + 'px', width: o.w + 'px', height: o.h + 'px' }"
                    >{{ o.text }}</div>
                  </div>
                </div>
              </div>
            </div>
          </div>

          <aside class="right">
            <div class="panel-head"><span>Data</span><svg viewBox="0 0 16 16" v-html="icons.pin"></svg><svg viewBox="0 0 16 16" v-html="icons.x"></svg></div>
            <div class="actions">
              <button class="act">Actions<i></i></button>
              <button v-for="b in ['edit', 'del', 'view']" :key="b" class="tool" :aria-label="b"><svg viewBox="0 0 16 16" v-html="icons[b]"></svg></button>
            </div>
            <ul class="tree data-tree">
              <li v-for="(r, i) in dataRows" :key="i">
                <i v-for="(g, k) in r.guides" :key="k" class="guide" :class="{ line: g }"></i>
                <i class="guide own" :class="{ first: r.first, last: r.last }"><button v-if="r.state" :class="r.state" :aria-label="'Toggle ' + r.label"></button></i>
                <svg viewBox="0 0 16 16" v-html="icons[r.icon]"></svg>
                <span :class="r.mark">{{ r.label }}</span>
              </li>
            </ul>
            <div class="dock-tabs">
              <button class="on"><svg viewBox="0 0 16 16" v-html="icons.db"></svg>Data</button>
              <button><svg viewBox="0 0 16 16" v-html="icons.tree"></svg>Report Tree</button>
            </div>
            <div class="panel-head"><span>Properties</span><svg viewBox="0 0 16 16" v-html="icons.pin"></svg><svg viewBox="0 0 16 16" v-html="icons.x"></svg></div>
            <button class="object-pick"><b>Barcode2</b> BarcodeObject<i></i></button>
            <div class="prop-bar">
              <button class="tool" aria-label="Categorized"><svg viewBox="0 0 16 16" v-html="icons.categorized"></svg></button>
              <button class="tool" aria-label="Alphabetical"><svg viewBox="0 0 16 16" v-html="icons.sort"></svg></button>
              <i class="sep"></i>
              <button class="tool pressed" aria-label="Properties"><svg viewBox="0 0 16 16" v-html="icons.list"></svg></button>
              <button class="tool" aria-label="Events"><svg viewBox="0 0 16 16" v-html="icons.bolt"></svg></button>
            </div>
            <div class="prop-grid">
              <table>
                <tbody>
                  <tr v-for="([name, value, strong, more], i) in props" :key="name" :class="{ cur: i === 0 }">
                    <td class="gut"><svg v-if="more" viewBox="0 0 6 10"><path d="M1 1l4 4-4 4" fill="none" stroke="#888" stroke-width="2" /></svg></td>
                    <th scope="row">{{ name }}</th>
                    <td :class="{ strong }">{{ value }}</td>
                  </tr>
                </tbody>
              </table>
              <div class="prop-scroll"><svg viewBox="0 0 11 17"><path d="M2 11l5-5 5 5" fill="none" stroke="#555" stroke-width="2" /></svg><i></i></div>
            </div>
          </aside>
        </div>
      </div>
    </div>

    <footer class="taskbar">
      <i class="search-box"></i><i class="run-a"></i><i class="run-b"></i><span>10:06</span>
    </footer>

    <div class="dialog" role="dialog" aria-label="Barcode Editor">
      <div class="dlg-title">
        <span>Barcode Editor</span>
        <button aria-label="Close"><svg viewBox="0 0 11 11"><path d="M0 0l11 11M11 0L0 11" stroke="#000" /></svg></button>
      </div>
      <div class="dlg-body">
        <div class="dlg-left">
          <span class="kind">
            <select aria-label="Kind"><option>Text</option></select>
            <svg viewBox="0 0 10 6"><path d="M1 0l4 4 4-4" fill="none" stroke="#444" /></svg>
          </span>
          <div class="editor">
            <textarea v-model="expression" aria-label="Expression" spellcheck="false"></textarea>
            <div class="sb">
              <svg viewBox="0 0 10 6"><path d="M1 5l4-4 4 4" fill="none" stroke="#bbb" stroke-width="2" /></svg>
              <svg viewBox="0 0 10 6"><path d="M1 1l4 4 4-4" fill="none" stroke="#bbb" stroke-width="2" /></svg>
            </div>
          </div>
        </div>
        <div class="dlg-right">
          <div class="fn-box">
            <ul class="tree">
              <li v-for="(r, i) in functionRows" :key="i">
                <i v-for="(g, k) in r.guides" :key="k" class="guide" :class="{ line: g }"></i>
                <i class="guide own" :class="{ first: r.first, last: r.last }"><button v-if="r.state" :class="r.state" :aria-label="'Toggle ' + r.label"></button></i>
                <svg viewBox="0 0 16 16" v-html="icons[r.icon]"></svg>
                <span :class="r.mark">{{ r.label }}</span>
              </li>
            </ul>
            <div class="sb">
              <svg viewBox="0 0 10 6"><path d="M1 5l4-4 4 4" fill="none" stroke="#555" stroke-width="2" /></svg>
              <i class="thumb"></i>
              <svg viewBox="0 0 10 6"><path d="M1 1l4 4 4-4" fill="none" stroke="#555" stroke-width="2" /></svg>
            </div>
          </div>
          <div class="desc"><em>char</em>&nbsp; Chr(<em>int</em>&nbsp; i)</div>
          <div class="dlg-buttons"><button>Save</button><button>Cancel</button></div>
        </div>
      </div>
    </div>
  </div>
</template>

<style>
html, body { height: 100%; }
body { margin: 0; overflow: hidden; }
#app { height: 100%; }
</style>

<style scoped>
* { box-sizing: border-box; }
button, select, textarea { font: inherit; color: inherit; border: 0; padding: 0; margin: 0; background: none; border-radius: 0; }
a { color: inherit; text-decoration: none; }
svg { display: block; flex: none; }
i { display: block; flex: none; font-style: normal; }
ul { list-style: none; margin: 0; padding: 0; }

.app {
  position: relative; height: 100%; display: flex; flex-direction: column; overflow: hidden;
  font: 12px/14px "Noto Sans Mono CJK SC", "DejaVu Sans Mono", monospace; color: #000;
  background:
    radial-gradient(160px 170px at 190px 560px, rgba(140, 80, 180, 0.5), transparent),
    radial-gradient(150px 300px at 0 720px, rgba(150, 15, 60, 0.5), transparent),
    linear-gradient(180deg, #241248 0, #2a1554 200px, #3d2069 320px, #4b2170 440px, #5a2878 560px, #4d1c5c 720px, #3a1449 880px, #2a0f3a 1048px);
}
.titlebar {
  height: 31px; flex: none; display: flex; align-items: center; justify-content: space-between; padding: 0 6px 2px 22px;
  font: 12px/16px "Open Sans", sans-serif; color: #fff; background: #07031a;
}
.win-buttons { display: flex; gap: 16px; }
.win-buttons button { width: 16px; height: 16px; }
.win-buttons svg { width: 14px; height: 14px; margin: auto; }
.userbar {
  height: 40px; flex: none; display: flex; align-items: flex-start; margin-left: 3px; padding-left: 20px; color: #fff;
  background: linear-gradient(90deg, #26134a 0, #2b1858 40%, #1d1140 70%, #24104a 100%);
}
.logo {
  width: 36px; height: 36px; border: 1px solid #cfd8e6; border-radius: 50%; background: #0b2d56; overflow: hidden;
  font: bold 10px/34px "Liberation Sans Narrow", "Liberation Sans", sans-serif; display: flex; justify-content: center;
}
.who { display: flex; flex-direction: column; margin: 1px 0 0 9px; font: 13px/18px "Open Sans", "Noto Sans CJK SC", sans-serif; }
.who span { font-size: 12px; line-height: 18px; color: #a79fb8; }
.links { margin-left: auto; display: flex; gap: 34px; padding: 10px 16px 0 0; font: 15px/20px "Open Sans", sans-serif; }
.links a { display: flex; align-items: center; gap: 6px; text-shadow: 0 1px 1px #000; }
.links svg { width: 16px; height: 16px; }

.main { flex: 1; min-height: 0; display: flex; }
.sidebar {
  width: 198px; flex: none; padding-top: 10px; color: #fff; border-left: 3px solid rgba(15, 2, 25, 0.5);
  font-family: "Noto Sans CJK SC", sans-serif;
}
.menu-head {
  display: flex; align-items: center; width: 198px; height: 32px; margin-left: -3px; padding: 0 12px 0 7px; gap: 7px;
  border-left: 3px solid #fff; background: rgba(28, 16, 50, 0.6); font-size: 12px;
}
.menu-head svg { width: 12px; height: 12px; }
.menu-head .chev { width: 10px; height: 10px; margin-left: auto; }
.menu-item { display: flex; align-items: center; height: 38px; padding-left: 28px; gap: 15px; font-size: 14px; line-height: 20px; }
.menu-item svg { width: 14px; height: 14px; }

.content { flex: 1; min-width: 0; display: flex; flex-direction: column; background: #fff; padding-left: 2px; }
.tabs {
  display: flex; height: 37px; flex: none; border-bottom: 2px solid #fff; font: 12px/16px "Noto Sans CJK SC", sans-serif; color: #6d7680;
  box-shadow: inset -8px 0 #fff, inset 0 -2px #dcdcdc;
}
.tab { display: flex; align-items: center; height: 33px; padding: 0 11px 0 12px; gap: 23px; margin-right: 1px; border-bottom: 2px solid transparent; }
.tab.active { color: #6338b5; border-color: #6338b5; }
.tab-x svg { width: 8px; height: 8px; }

.designer { flex: 1; min-height: 0; display: flex; background: #535353; }
.left { flex: 1; min-width: 0; display: flex; flex-direction: column; }
.bars { display: flex; flex-direction: column; gap: 2px; height: 77px; flex: none; }
.bar-row { display: flex; gap: 2px; height: 24px; }
.bar { display: flex; align-items: center; height: 24px; border-radius: 2px; overflow: hidden; background: linear-gradient(#cccfd4, #c4c7cc 50%, #a9adb5 85%, #9a9ea8); }
.grip { width: 8px; height: 20px; background: linear-gradient(#3c3c3c, #3c3c3c) 3px 1px / 2px 2px no-repeat, linear-gradient(#3c3c3c, #3c3c3c) 3px 6px / 2px 2px no-repeat, linear-gradient(#3c3c3c, #3c3c3c) 3px 11px / 2px 2px no-repeat, linear-gradient(#3c3c3c, #3c3c3c) 3px 16px / 2px 2px no-repeat; }
.tool { width: 24px; height: 24px; flex: none; }
.tool svg { width: 16px; height: 16px; margin: auto; }
.sep { width: 3px; height: 16px; background: linear-gradient(90deg, #8d9199 1px, #eef0f2 1px 2px, transparent 2px); }
.drop { width: 13px; height: 24px; }
.drop::after, .combo::after, .act i, .object-pick i::after { content: ""; display: block; width: 0; border: 3px solid transparent; border-top-color: #000; border-bottom: 0; margin: auto; }
.drop.off::after, .combo::after { border-top-color: #85878b; }
.pad { width: 4px; }
.more { width: 11px; height: 24px; background: linear-gradient(#8e939c, #4f545e); }
.more svg { width: 11px; height: 24px; }
.combo { display: flex; align-items: center; height: 20px; border: 1px solid #8c9096; background: #c9ccd1; margin-right: 5px; padding-right: 5px; }
.combo select { appearance: none; flex: 1; min-width: 0; height: 16px; opacity: 1; }
.combo::after { margin: 0; }
.combo.font { width: 120px; margin-left: 2px; }
.combo.size { width: 50px; margin-right: 2px; }

.work { flex: 1; min-height: 0; display: flex; }
.toolbox { width: 28px; flex: none; border-right: 1px solid #55585e; background: linear-gradient(90deg, #cbced3, #c2c5cb 50%, #9a9fa9); }
.box-tool { display: block; width: 25px; height: 25px; }
.box-tool svg { width: 16px; height: 16px; margin: auto; }
.box-more { width: 4px; height: 6px; margin: 0 0 1px 13px; border: 3px solid transparent; border-left: 4px solid #000; border-right: 0; }
.bands { width: 148px; flex: none; background: #cbced3; }
.bands-head { display: flex; align-items: center; justify-content: space-between; height: 24px; padding: 0 5px 2px 5px; color: #4b2fa0; }
.bands-head svg { width: 14px; height: 9px; }
.bands-body { display: flex; justify-content: space-between; padding-right: 5px; }
.band {
  width: 120px; height: 221px; border: solid #9d9d9d; border-width: 0 1px 1px 0; padding: 101px 0 0 5px;
  background: linear-gradient(#ffd9a8, #ffa733 33%, #ffb55a 55%, #ffd39c);
}
.v-ruler { width: 14px; height: 219px; background: #fff; font: 9px "DejaVu Sans", sans-serif; }
.handle { width: 8px; height: 10px; margin: 40px 0 0 140px; }
.canvas { flex: 1; min-width: 0; display: flex; flex-direction: column; }
.h-strip { height: 24px; flex: none; padding-top: 5px; background: #cbced3; }
.h-ruler { width: 266px; height: 14px; overflow: visible; background: #fff; font: 9px "DejaVu Sans", sans-serif; }
.stage { position: relative; flex: 1; background: linear-gradient(#4c4c4c, #0e0e0e); }
.swoosh { position: absolute; left: 264px; top: 0; width: 340px; height: 44px; }
.page { position: relative; width: 266px; height: 221px; background: #fff; box-shadow: 3px 3px 4px rgba(0, 0, 0, 0.6); }
.dots { position: absolute; inset: 0; width: 266px; height: 221px; }
.frame { position: absolute; left: 5px; top: 10px; width: 251px; height: 207px; border: 1px solid #000; }
.qr { position: absolute; background: #fff; }
.qr.big { left: 31px; top: 124px; width: 82px; height: 74px; }
.qr.small { left: 176px; top: 68px; width: 56px; height: 43px; }
.obj {
  position: absolute; overflow: hidden; padding: 0 0 0 4px; font-size: 12px; line-height: 13px; white-space: nowrap;
  --k: linear-gradient(#000, #000) no-repeat;
  background:
    var(--k) 0 0 / 4px 1px, var(--k) 0 0 / 1px 4px, var(--k) 100% 0 / 4px 1px, var(--k) 100% 0 / 1px 4px,
    var(--k) 0 100% / 4px 1px, var(--k) 0 100% / 1px 4px, var(--k) 100% 100% / 4px 1px, var(--k) 100% 100% / 1px 4px;
}
.obj.wrap { padding-right: 10px; white-space: normal; word-break: break-all; }
.obj.large { padding-left: 5px; font-size: 14px; line-height: 14px; }

.right { width: 244px; flex: none; display: flex; flex-direction: column; margin-top: 77px; padding-left: 3px; overflow: hidden; }
.panel-head { display: flex; align-items: center; height: 20px; flex: none; padding-left: 5px; color: #333; background: linear-gradient(#e4e6e8, #c6c9ce); }
.panel-head span { flex: 1; }
.panel-head svg { width: 14px; height: 14px; margin-left: 2px; }
.panel-head svg:last-child { margin-right: -4px; }
.actions { display: flex; align-items: center; height: 25px; flex: none; padding-left: 6px; border-bottom: 1px solid #6d7077; background: linear-gradient(#cccfd4, #c4c7cc 50%, #a9adb5 85%, #9a9ea8); }
.act { display: flex; align-items: center; gap: 11px; width: 62px; }
.act i { margin: 0; }
.tree li { display: flex; align-items: center; height: 16px; white-space: nowrap; }
.tree svg { width: 16px; height: 16px; }
.tree span { padding: 0 2px; margin-left: 3px; line-height: 16px; }
.guide { position: relative; width: 19px; height: 16px; }
.guide.line, .guide.own::before { background: repeating-linear-gradient(#808080 0 1px, transparent 1px 2px) 9px 0 / 1px 16px no-repeat; }
.guide.own::before { content: ""; position: absolute; inset: 0; }
.guide.own.last::before { height: 8px; }
.guide.own.first::before { top: 8px; }
.guide.own::after { content: ""; position: absolute; left: 9px; right: 0; top: 8px; height: 1px; background: repeating-linear-gradient(90deg, #808080 0 1px, transparent 1px 2px); }
.guide button { position: absolute; z-index: 1; left: 5px; top: 4px; width: 9px; height: 9px; border: 1px solid #8c8c8c; border-radius: 1px; background: linear-gradient(#3c57a8, #3c57a8) center / 5px 1px no-repeat #f5f5f5; }
.guide button.closed { background: linear-gradient(#3c57a8, #3c57a8) center / 5px 1px no-repeat, linear-gradient(#3c57a8, #3c57a8) center / 1px 5px no-repeat #f5f5f5; }
.hot { background: #f0f0f0; }
.selected { background: #0078d7; color: #fff; }
.data-tree { height: 427px; flex: none; padding-left: 2px; background: #fff; }
.dock-tabs { display: flex; gap: 3px; height: 28px; flex: none; padding-left: 7px; }
.dock-tabs button { display: flex; align-items: center; gap: 3px; height: 22px; padding: 0 5px 2px 2px; color: #222; background: linear-gradient(#b4b9c2, #d9dbde); border-radius: 0 0 2px 2px; }
.dock-tabs .on { background: #fff; }
.dock-tabs svg { width: 16px; height: 16px; }
.object-pick { display: flex; align-items: center; gap: 6px; height: 20px; flex: none; padding-left: 5px; background: #fff; border: 1px solid #888c92; border-width: 1px 0; }
.object-pick i { width: 18px; height: 18px; margin: 0 -7px 0 auto; padding: 6px 6px 0 0; border: 1px solid #8c8f94; background: #dfe1e4; }
.prop-bar { display: flex; align-items: center; height: 25px; flex: none; padding-left: 1px; border-bottom: 1px solid #6d7077; background: linear-gradient(#cccfd4, #c4c7cc 50%, #a9adb5 85%, #9a9ea8); }
.tool.pressed { height: 22px; border: 1px solid #d8a03c; border-radius: 2px; background: linear-gradient(#fbd39a, #fdb75c 50%, #ffe29a); }
.prop-grid { flex: 1; min-height: 0; display: flex; overflow: hidden; background: #cbced3; border-left: 1px solid #a4a7ac; }
table { flex: none; width: 229px; border-collapse: collapse; table-layout: fixed; height: max-content; }
tr { height: 17px; }
th, td { padding: 0 3px; height: 17px; font-weight: 400; line-height: 16px; text-align: left; white-space: nowrap; overflow: hidden; background: #fff; border-bottom: 1px solid #cbced3; }
th { width: 91px; border-right: 1px solid #cbced3; }
.gut { width: 21px; background: #cbced3; padding: 0 7px; }
.gut svg { width: 6px; height: 10px; }
.cur th { background: #cbced3; }
.strong, .object-pick b { font-weight: 700; }
.who b { font-weight: 400; }
.prop-scroll { flex: 1; background: #f0f0f0; margin-left: 1px; }
.prop-scroll svg { width: 11px; height: 17px; }
.prop-scroll i { height: 119px; background: #cdcdcd; }

.taskbar { height: 8px; flex: none; display: flex; overflow: hidden; background: #1a2a45; }
.search-box { width: 344px; margin-left: 48px; background: #f3f3f3; }
.run-a { width: 49px; margin-left: 343px; background: #a0673a; }
.run-b { width: 47px; margin-left: 491px; background: #4a5664; }
.taskbar span { margin-left: auto; padding: 3px 74px 0 0; color: #fff; line-height: 14px; }

.dialog { position: absolute; left: 50%; top: 326px; width: 614px; transform: translateX(-50%); background: #f0f0f0; box-shadow: 0 0 0 1px #2a2a2a, 0 4px 14px rgba(0, 0, 0, 0.5); }
.dlg-title { display: flex; align-items: center; justify-content: space-between; height: 30px; padding: 0 9px 2px 8px; background: #fff; font: 13px/18px "Open Sans", sans-serif; }
.dlg-title svg { width: 11px; height: 11px; }
.dlg-body { display: flex; gap: 9px; padding: 12px 11px 9px 12px; }
.dlg-left { flex: 1; display: flex; flex-direction: column; gap: 15px; margin-bottom: 28px; }
.kind { position: relative; display: flex; align-items: center; height: 20px; border: 1px solid #adadad; background: #e1e1e1; }
.kind select { appearance: none; flex: 1; padding-left: 3px; height: 18px; }
.kind svg { position: absolute; right: 4px; width: 10px; height: 6px; pointer-events: none; }
.editor { flex: 1; display: flex; border: 1px solid #7a7a7a; background: #fff; padding: 1px; }
.editor textarea { flex: 1; resize: none; outline: 0; padding: 0 2px; overflow: hidden; line-height: 14px; }
.sb { width: 16px; flex: none; display: flex; flex-direction: column; align-items: center; background: #f0f0f0; padding: 6px 0 5px; }
.sb svg { width: 10px; height: 6px; }
.sb svg:last-child { margin-top: auto; }
.thumb { width: 15px; height: 92px; margin-top: 5px; background: #cdcdcd; }
.dlg-right { width: 175px; flex: none; display: flex; flex-direction: column; }
.fn-box { display: flex; height: 222px; border: 1px solid #828790; background: #fff; padding: 1px; overflow: hidden; }
.fn-box .tree { flex: 1; min-width: 0; overflow: hidden; padding-left: 2px; }
.desc { height: 76px; margin-top: 3px; padding: 1px 2px; background: #fff; }
.desc em { font-style: normal; color: #0000f0; }
.dlg-buttons { display: flex; gap: 9px; margin: 7px 1px 0; }
.dlg-buttons button { flex: 1; height: 21px; border: 1px solid #adadad; background: #e1e1e1; padding-bottom: 2px; }
</style>
